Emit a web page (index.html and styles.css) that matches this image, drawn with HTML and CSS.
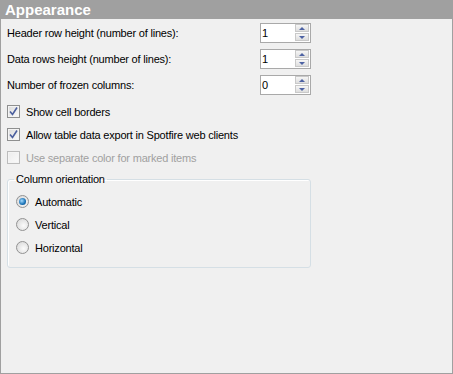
FILE: index.html
```html
<!DOCTYPE html>
<html lang="en">
<head>
    <meta charset="UTF-8">
    <title>Appearance</title>
    <link rel="stylesheet" href="styles.css">
</head>
<body>
    <div class="panel">
        <div class="panel-title">Appearance</div>
        <div class="panel-body">
            <div class="fields">
                <div class="field-row">
                    <label class="field-label">Header row height (number of lines):</label>
                    <div class="spin">
                        <span class="spin-value">1</span>
                        <div class="spin-buttons">
                            <span class="spin-btn up"></span>
                            <span class="spin-btn down"></span>
                        </div>
                    </div>
                </div>
                <div class="field-row">
                    <label class="field-label">Data rows height (number of lines):</label>
                    <div class="spin">
                        <span class="spin-value">1</span>
                        <div class="spin-buttons">
                            <span class="spin-btn up"></span>
                            <span class="spin-btn down"></span>
                        </div>
                    </div>
                </div>
                <div class="field-row">
                    <label class="field-label">Number of frozen columns:</label>
                    <div class="spin">
                        <span class="spin-value">0</span>
                        <div class="spin-buttons">
                            <span class="spin-btn up"></span>
                            <span class="spin-btn down"></span>
                        </div>
                    </div>
                </div>
            </div>

            <div class="check-row">
                <span class="check">
                    <svg width="11" height="11" viewBox="0 0 11 11"><path d="M2 5.5 L4.5 8.5 L9 1.5" fill="none" stroke="#4b5f9e" stroke-width="1.6"/></svg>
                </span>
                <span>Show cell borders</span>
            </div>
            <div class="check-row">
                <span class="check">
                    <svg width="11" height="11" viewBox="0 0 11 11"><path d="M2 5.5 L4.5 8.5 L9 1.5" fill="none" stroke="#4b5f9e" stroke-width="1.6"/></svg>
                </span>
                <span>Allow table data export in Spotfire web clients</span>
            </div>
            <div class="check-row disabled">
                <span class="check"></span>
                <span>Use separate color for marked items</span>
            </div>

            <fieldset class="group">
                <legend>Column orientation</legend>
                <div class="radio-row">
                    <span class="radio checked"></span>
                    <span>Automatic</span>
                </div>
                <div class="radio-row">
                    <span class="radio"></span>
                    <span>Vertical</span>
                </div>
                <div class="radio-row">
                    <span class="radio"></span>
                    <span>Horizontal</span>
                </div>
            </fieldset>
        </div>
    </div>
</body>
</html>
```

FILE: styles.css
```css
body {
    margin: 0;
    padding: 0;
    font-family: "Liberation Sans", Arial, sans-serif;
    font-size: 11px;
    letter-spacing: -0.2px;
    color: #000;
    background-color: #f0f0f0;
}

.panel {
    box-sizing: border-box;
    width: 453px;
    height: 374px;
    border: 1px solid #a0a0a0;
    border-top: none;
    background-color: #f0f0f0;
}

.panel-title {
    height: 19px;
    line-height: 19px;
    padding-left: 4px;
    background-color: #a0a0a0;
    color: #fff;
    font-size: 15px;
    font-weight: bold;
    letter-spacing: 0;
}

.panel-body {
    padding: 4px 6px 0 6px;
}

.fields {
    display: flex;
    flex-direction: column;
    gap: 6px;
    margin-bottom: 5px;
}

.field-row {
    display: flex;
    align-items: center;
    height: 20px;
}

.field-label {
    width: 253px;
}

.spin {
    box-sizing: border-box;
    display: flex;
    width: 51px;
    height: 20px;
    border: 1px solid #a9a9a9;
    background-color: #fff;
}

.spin-value {
    flex: 1;
    padding-left: 1px;
    line-height: 18px;
}

.spin-buttons {
    display: flex;
    flex-direction: column;
    gap: 1px;
    margin-right: 1px;
}

.spin-btn {
    box-sizing: border-box;
    display: flex;
    align-items: center;
    justify-content: center;
    width: 14px;
    height: 8px;
    border: 1px solid #c9c9c9;
    background: linear-gradient(#f6f6f6, #dedede);
}

.spin-btn::after {
    content: "";
    border-left: 3px solid transparent;
    border-right: 3px solid transparent;
}

.spin-btn.up::after {
    border-bottom: 3px solid #4d62a3;
}

.spin-btn.down::after {
    border-top: 3px solid #4d62a3;
}

.check-row {
    display: flex;
    align-items: center;
    gap: 6px;
    height: 23px;
}

.check {
    box-sizing: border-box;
    display: flex;
    align-items: center;
    justify-content: center;
    width: 13px;
    height: 13px;
    border: 1px solid #8e8f8f;
    background: linear-gradient(135deg, #dadada, #fcfcfc);
    box-shadow: inset 0 0 0 1px #f4f4f4;
}

.check-row.disabled {
    color: #a0a0a0;
}

.check-row.disabled .check {
    border-color: #bcbcbc;
    background: linear-gradient(135deg, #ececec, #fafafa);
}

.group {
    box-sizing: border-box;
    width: 304px;
    margin: 4px 0 0 0;
    padding: 4px 6px 8px 6px;
    border: 1px solid #d5dfe5;
    border-radius: 3px;
    box-shadow: inset 1px 1px 0 #fff;
}

.group legend {
    padding: 0 2px;
    line-height: 13px;
}

.radio-row {
    display: flex;
    align-items: center;
    gap: 6px;
    height: 23px;
    padding-left: 2px;
}

.radio {
    box-sizing: border-box;
    display: flex;
    align-items: center;
    justify-content: center;
    width: 13px;
    height: 13px;
    border: 1px solid #929292;
    border-radius: 50%;
    background: radial-gradient(circle at 60% 60%, #fbfbfb, #d4d4d4);
}

.radio.checked::after {
    content: "";
    width: 7px;
    height: 7px;
    border-radius: 50%;
    background: radial-gradient(circle at 40% 40%, #a6dcff, #1670b5 60%, #0b3f73);
}
```
